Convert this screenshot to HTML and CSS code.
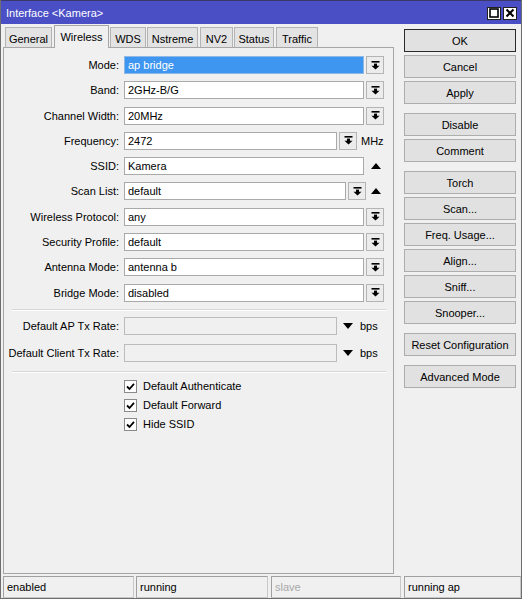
FILE: index.html
```html
<!DOCTYPE html>
<html lang="en">
<head>
  <meta charset="UTF-8">
  <title>Interface &lt;Kamera&gt;</title>
  <link rel="stylesheet" href="styles.css">
</head>
<body>
  <div class="window">
    <div class="titlebar">
      <span class="title">Interface &lt;Kamera&gt;</span>
      <div class="wbtns">
        <span class="wbtn"><svg width="10" height="10" viewBox="0 0 10 10"><rect x="1" y="1" width="8" height="8" fill="none" stroke="#000" stroke-width="1.6"/></svg></span>
        <span class="wbtn"><svg width="10" height="10" viewBox="0 0 10 10"><path d="M1.5 1.5L8.5 8.5M8.5 1.5L1.5 8.5" stroke="#000" stroke-width="2"/></svg></span>
      </div>
    </div>

    <div class="main">
      <div class="left">
        <div class="tabs">
          <div class="tab w-general">General</div>
          <div class="tab w-wireless active">Wireless</div>
          <div class="tab w-wds">WDS</div>
          <div class="tab w-nstreme">Nstreme</div>
          <div class="tab w-nv2">NV2</div>
          <div class="tab w-status">Status</div>
          <div class="tab w-traffic">Traffic</div>
        </div>

        <div class="panel">
          <div class="row">
            <label>Mode:</label>
            <div class="field full selected">ap bridge</div>
            <span class="dd"><svg width="9" height="9" viewBox="0 0 9 9"><rect x="0.5" y="0" width="8" height="1.6"/><rect x="3" y="2.6" width="3" height="2.4"/><polygon points="0.5,4.8 8.5,4.8 4.5,8.6"/></svg></span>
          </div>
          <div class="row">
            <label>Band:</label>
            <div class="field full">2GHz-B/G</div>
            <span class="dd"><svg width="9" height="9" viewBox="0 0 9 9"><rect x="0.5" y="0" width="8" height="1.6"/><rect x="3" y="2.6" width="3" height="2.4"/><polygon points="0.5,4.8 8.5,4.8 4.5,8.6"/></svg></span>
          </div>
          <div class="row">
            <label>Channel Width:</label>
            <div class="field full">20MHz</div>
            <span class="dd"><svg width="9" height="9" viewBox="0 0 9 9"><rect x="0.5" y="0" width="8" height="1.6"/><rect x="3" y="2.6" width="3" height="2.4"/><polygon points="0.5,4.8 8.5,4.8 4.5,8.6"/></svg></span>
          </div>
          <div class="row">
            <label>Frequency:</label>
            <div class="field short">2472</div>
            <span class="dd"><svg width="9" height="9" viewBox="0 0 9 9"><rect x="0.5" y="0" width="8" height="1.6"/><rect x="3" y="2.6" width="3" height="2.4"/><polygon points="0.5,4.8 8.5,4.8 4.5,8.6"/></svg></span>
            <span class="unit">MHz</span>
          </div>
          <div class="row">
            <label>SSID:</label>
            <div class="field full">Kamera</div>
            <span class="up"><svg width="10" height="6" viewBox="0 0 10 6"><polygon points="0,6 10,6 5,0"/></svg></span>
          </div>
          <div class="row">
            <label>Scan List:</label>
            <div class="field mid">default</div>
            <span class="dd"><svg width="9" height="9" viewBox="0 0 9 9"><rect x="0.5" y="0" width="8" height="1.6"/><rect x="3" y="2.6" width="3" height="2.4"/><polygon points="0.5,4.8 8.5,4.8 4.5,8.6"/></svg></span>
            <span class="up up-near"><svg width="10" height="6" viewBox="0 0 10 6"><polygon points="0,6 10,6 5,0"/></svg></span>
          </div>
          <div class="row">
            <label>Wireless Protocol:</label>
            <div class="field full">any</div>
            <span class="dd"><svg width="9" height="9" viewBox="0 0 9 9"><rect x="0.5" y="0" width="8" height="1.6"/><rect x="3" y="2.6" width="3" height="2.4"/><polygon points="0.5,4.8 8.5,4.8 4.5,8.6"/></svg></span>
          </div>
          <div class="row">
            <label>Security Profile:</label>
            <div class="field full">default</div>
            <span class="dd"><svg width="9" height="9" viewBox="0 0 9 9"><rect x="0.5" y="0" width="8" height="1.6"/><rect x="3" y="2.6" width="3" height="2.4"/><polygon points="0.5,4.8 8.5,4.8 4.5,8.6"/></svg></span>
          </div>
          <div class="row">
            <label>Antenna Mode:</label>
            <div class="field full">antenna b</div>
            <span class="dd"><svg width="9" height="9" viewBox="0 0 9 9"><rect x="0.5" y="0" width="8" height="1.6"/><rect x="3" y="2.6" width="3" height="2.4"/><polygon points="0.5,4.8 8.5,4.8 4.5,8.6"/></svg></span>
          </div>
          <div class="row">
            <label>Bridge Mode:</label>
            <div class="field full">disabled</div>
            <span class="dd"><svg width="9" height="9" viewBox="0 0 9 9"><rect x="0.5" y="0" width="8" height="1.6"/><rect x="3" y="2.6" width="3" height="2.4"/><polygon points="0.5,4.8 8.5,4.8 4.5,8.6"/></svg></span>
          </div>

          <div class="sep"></div>

          <div class="row rate">
            <label>Default AP Tx Rate:</label>
            <div class="field short off"></div>
            <span class="down"><svg width="10" height="6" viewBox="0 0 10 6"><polygon points="0,0 10,0 5,6"/></svg></span>
            <span class="unit">bps</span>
          </div>
          <div class="row rate">
            <label>Default Client Tx Rate:</label>
            <div class="field short off"></div>
            <span class="down"><svg width="10" height="6" viewBox="0 0 10 6"><polygon points="0,0 10,0 5,6"/></svg></span>
            <span class="unit">bps</span>
          </div>

          <div class="sep sep2"></div>

          <div class="checks">
            <div class="check"><span class="box"><svg width="9" height="9" viewBox="0 0 9 9"><path d="M1 4.5L3.5 7L8 1.8" fill="none" stroke="#000" stroke-width="1.8"/></svg></span>Default Authenticate</div>
            <div class="check"><span class="box"><svg width="9" height="9" viewBox="0 0 9 9"><path d="M1 4.5L3.5 7L8 1.8" fill="none" stroke="#000" stroke-width="1.8"/></svg></span>Default Forward</div>
            <div class="check"><span class="box"><svg width="9" height="9" viewBox="0 0 9 9"><path d="M1 4.5L3.5 7L8 1.8" fill="none" stroke="#000" stroke-width="1.8"/></svg></span>Hide SSID</div>
          </div>
        </div>
      </div>

      <div class="buttons">
        <div class="btn default">OK</div>
        <div class="btn">Cancel</div>
        <div class="btn">Apply</div>
        <div class="btn group">Disable</div>
        <div class="btn">Comment</div>
        <div class="btn group">Torch</div>
        <div class="btn">Scan...</div>
        <div class="btn">Freq. Usage...</div>
        <div class="btn">Align...</div>
        <div class="btn">Sniff...</div>
        <div class="btn">Snooper...</div>
        <div class="btn group">Reset Configuration</div>
        <div class="btn group">Advanced Mode</div>
      </div>
    </div>

    <div class="statusbar">
      <div class="cell c1">enabled</div>
      <div class="cell c2">running</div>
      <div class="cell c3 dim">slave</div>
      <div class="cell c4">running ap</div>
    </div>
  </div>
</body>
</html>
```

FILE: styles.css
```css
* { box-sizing: border-box; margin: 0; padding: 0; }
body { font-family: "Liberation Sans", Arial, sans-serif; font-size: 11px; color: #000; background: #f0f0f0; }

.window {
  width: 522px;
  height: 599px;
  background: #f0f0f0;
  border: 1px solid #6e6e6e;
  border-top: none;
}

.titlebar {
  height: 24px;
  background: #4a4fc6;
  border-top: 1px solid #3a3a6a;
  color: #fff;
  display: flex;
  align-items: center;
  padding: 0 4px 0 5px;
  font-size: 11px;
}
.title { flex: 1; }
.wbtns { display: flex; gap: 2px; margin-top: 1px; }
.wbtn {
  width: 14px;
  height: 13px;
  background: #fff;
  border: 1px solid #222;
  display: flex;
  align-items: center;
  justify-content: center;
}

.main { display: flex; padding-left: 2px; }
.left { width: 391px; }

.tabs { height: 23px; display: flex; align-items: flex-end; padding-left: 2px; }
.tab {
  height: 20px;
  margin-right: 1px;
  background: #e3e3e3;
  border: 1px solid #b4b4b4;
  border-bottom: none;
  display: flex;
  align-items: center;
  justify-content: center;
  padding-top: 3px;
}
.tab.active {
  height: 23px;
  background: #f0f0f0;
  border-color: #a6a6a6;
  padding-top: 0;
  padding-bottom: 1px;
  margin-bottom: -1px;
  position: relative;
  margin-left: 1px;
}
.w-general { width: 47px; }
.w-wireless { width: 55px; }
.w-wds { width: 36px; }
.w-nstreme { width: 51px; }
.w-nv2 { width: 33px; margin-left: 1px; }
.w-status { width: 40px; }
.w-traffic { width: 42px; margin-left: 1px; }

.panel {
  height: 527px;
  border: 1px solid #a6a6a6;
  padding-top: 8px;
}

.row { display: flex; align-items: center; height: 18px; margin-bottom: 7.3px; }
.row label { width: 115px; text-align: right; margin-right: 5px; }
.field {
  height: 18px;
  background: #fff;
  border: 1px solid #a9a9a9;
  padding: 0 3px;
  line-height: 16px;
  white-space: nowrap;
}
.field.full { width: 240px; }
.field.mid { width: 222px; }
.field.short { width: 213px; }
.field.selected { background: #3f96f0; color: #fff; border-color: #8fb8e6; }
.field.off { background: #f0f0f0; border-color: #bcbcbc; }

.dd {
  width: 18px;
  height: 18px;
  margin-left: 2px;
  background: #ececec;
  border: 1px solid #b4b4b4;
  display: flex;
  align-items: center;
  justify-content: center;
}
.unit { margin-left: 4px; }
.up { margin-left: 7px; display: flex; }
.up.up-near { margin-left: 5px; }
.down { margin-left: 6px; display: flex; }
.rate .unit { margin-left: 7px; }

.sep {
  margin: 0 0 6px 8px;
  width: 374px;
  border-top: 1px solid #d6d6d6;
  border-bottom: 1px solid #fff;
}
.row.rate { margin-bottom: 9px; }
.sep2 { margin-bottom: 7px; }

.checks { padding-left: 120px; }
.check { display: flex; align-items: center; height: 13px; margin-bottom: 6px; }
.box {
  width: 13px;
  height: 13px;
  background: #fff;
  border: 1px solid #8a8a8a;
  display: flex;
  align-items: center;
  justify-content: center;
  margin-right: 6px;
}

.buttons { width: 112px; margin-left: 10px; padding-top: 5px; }
.btn {
  height: 23px;
  margin-bottom: 3px;
  background: #e1e1e1;
  border: 1px solid #adadad;
  display: flex;
  align-items: center;
  justify-content: center;
}
.btn.default { border-color: #2a2a2a; }
.btn.group { margin-top: 9px; }

.statusbar { display: flex; padding: 2px 0 0 2px; }
.cell {
  height: 22px;
  border: 1px solid #c8c8c8;
  border-top-color: #a0a0a0;
  border-left-color: #a0a0a0;
  padding-left: 3px;
  line-height: 20px;
}
.c1 { width: 131px; }
.c2 { width: 132px; margin-left: 2px; }
.c3 { width: 130px; margin-left: 3px; }
.c4 { width: 117px; margin-left: 3px; }
.dim { color: #a8a8a8; }
```
